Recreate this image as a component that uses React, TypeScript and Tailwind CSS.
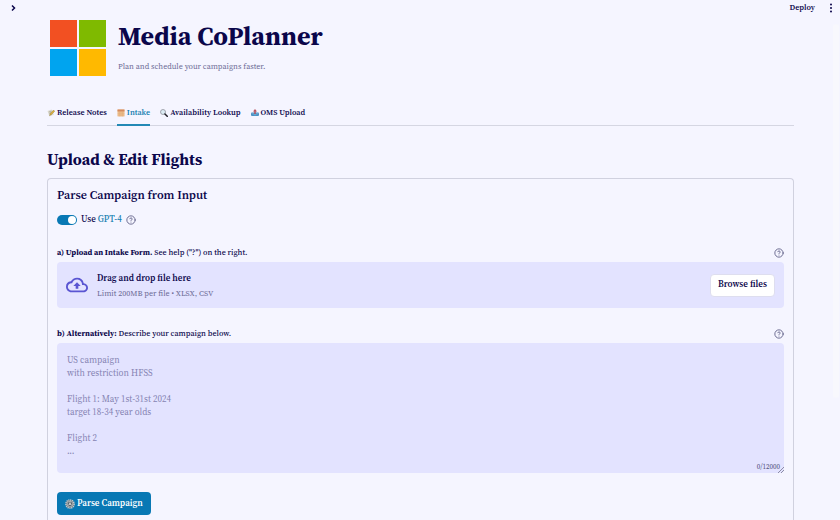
import type { ReactNode } from 'react';

const PLACEHOLDER = `US campaign
with restriction HFSS

Flight 1: May 1st-31st 2024
target 18-34 year olds

Flight 2
...`;

interface TabProps {
  icon: ReactNode;
  label: string;
  active?: boolean;
}

function MemoIcon() {
  return (
    <svg viewBox="0 0 16 16" className="h-2 w-2 shrink-0" aria-hidden="true">
      <path d="M1 4 9 1l5 10-9 4z" fill="#dedbd0" />
      <path d="M3.500 6 9 4M4.500 8.500l4-1.500M6 11l3-1" stroke="#8b8a80" strokeWidth="1" />
      <path d="m5 13 1.500-4L13 2l2.500 2.500-7 7z" fill="#dcae3a" stroke="#7a6a2c" strokeWidth=".7" />
    </svg>
  );
}

function CalendarIcon() {
  return (
    <svg viewBox="0 0 16 16" className="h-2 w-2 shrink-0" aria-hidden="true">
      <rect x="1" y="1" width="14" height="14" rx="1" fill="#efc08d" />
      <path d="M1 1h14v4H1z" fill="#d48a5e" />
      <path d="M1 8.500h14M1 12h14M5.500 5v10M10.500 5v10" stroke="#d9a473" strokeWidth=".8" />
    </svg>
  );
}

function SearchIcon() {
  return (
    <svg viewBox="0 0 16 16" className="h-2 w-2 shrink-0" aria-hidden="true">
      <circle cx="6" cy="6" r="5" fill="#dcecf4" stroke="#8a8d96" strokeWidth="1.500" />
      <path d="m10 10 4.500 4.500" stroke="#202028" strokeWidth="3" strokeLinecap="round" />
    </svg>
  );
}

function OutboxIcon() {
  return (
    <svg viewBox="0 0 16 16" className="h-2 w-2 shrink-0" aria-hidden="true">
      <path d="M1 7h14l1 2v4l-2 1H2l-2-1V9z" fill="#4a91c4" />
      <path d="M2 9.500h3l1 2h4l1-2h3" fill="none" stroke="#8fc0e0" />
      <path d="m8 0 4 5H9.500v5h-3V5H4z" fill="#b8505e" />
    </svg>
  );
}

function GearIcon() {
  return (
    <svg viewBox="0 0 16 16" className="h-[10px] w-[10px] shrink-0" aria-hidden="true">
      <circle cx="8" cy="8" r="6.500" fill="#59656e" stroke="#c4c9cc" strokeWidth="2.500" strokeDasharray="2 1" />
      <circle cx="8" cy="8" r="4.500" fill="none" stroke="#b7bdc0" strokeWidth="1.200" />
      <path d="M8 8V3.500M8 8l4 2.500M8 8l-4 2.500" stroke="#c4c9cc" strokeWidth="1.200" />
      <circle cx="8" cy="8" r="1.500" fill="#d5d8da" />
    </svg>
  );
}

function CloudUploadIcon() {
  return (
    <svg viewBox="0 0 24 24" className="h-[22px] w-[22px] shrink-0 fill-[#5a55d2]" aria-hidden="true">
      <path d="M19.350 10.040A7.490 7.490 0 0 0 12 4C9.110 4 6.600 5.640 5.350 8.040A5.994 5.994 0 0 0 0 14c0 3.310 2.690 6 6 6h13c2.760 0 5-2.240 5-5 0-2.640-2.050-4.780-4.650-4.960zM19 18H6c-2.210 0-4-1.790-4-4s1.790-4 4-4h.710C7.370 7.690 9.480 6 12 6c3.040 0 5.500 2.460 5.500 5.500v.500H19c1.660 0 3 1.340 3 3s-1.340 3-3 3zM8 13h2.550v3h2.900v-3H16l-4-4z" />
    </svg>
  );
}

function HelpButton({ label }: { label: string }) {
  return (
    <button type="button" aria-label={label} className="flex shrink-0 text-[#55557f]">
      <svg viewBox="0 0 24 24" className="h-[10px] w-[10px]" fill="none" stroke="currentColor" strokeWidth="2" strokeLinecap="round" strokeLinejoin="round">
        <circle cx="12" cy="12" r="10" />
        <path d="M9.090 9a3 3 0 0 1 5.830 1c0 2-3 3-3 3M12 17h.010" />
      </svg>
    </button>
  );
}

function Tab({ icon, label, active }: TabProps) {
  return (
    <button
      type="button"
      role="tab"
      aria-selected={!!active}
      className={`-mb-px flex h-6 items-center gap-0.5 border-b-2 text-[8px] font-semibold ${
        active ? 'border-[#2389b5] text-[#167fb0]' : 'border-transparent'
      }`}
    >
      {icon}
      {label}
    </button>
  );
}

export default function App() {
  return (
    <div className="relative flex h-screen flex-col overflow-hidden bg-[#f5f5ff] font-['Source_Serif_4','Source_Serif_Pro','Liberation_Serif',serif] text-[#0b064b]">
      <header className="flex h-4 shrink-0 items-center justify-between pr-1 pl-2">
        <button type="button" aria-label="Open sidebar">
          <svg viewBox="0 0 10 10" className="h-[10px] w-[10px]" fill="none" stroke="currentColor" strokeWidth="1.500">
            <path d="m4 2.500 2.500 2.500L4 7.500" />
          </svg>
        </button>
        <div className="flex items-center gap-[11px]">
          <button type="button" className="text-[8px] font-semibold">Deploy</button>
          <button type="button" aria-label="Menu">
            <svg viewBox="0 0 10 10" className="h-[10px] w-[10px]" fill="currentColor">
              <circle cx="5" cy="1.500" r="1" />
              <circle cx="5" cy="5" r="1" />
              <circle cx="5" cy="8.500" r="1" />
            </svg>
          </button>
        </div>
      </header>

      {/* Scroll thumb */}
      <div className="absolute top-6 right-px h-[72%] w-1.5 rounded-full bg-[#f8f8fd]" />

      <main className="flex min-h-0 flex-1 flex-col pr-[46px] pl-[47px]">
        <div className="flex gap-3 pt-1 pl-[3px]">
          <svg viewBox="0 0 56 56" className="h-14 w-14 shrink-0" aria-hidden="true">
            <path d="M0 0h27v27H0z" fill="#f25022" />
            <path d="M29 0h27v27H29z" fill="#7fba00" />
            <path d="M0 29h27v27H0z" fill="#00a4ef" />
            <path d="M29 29h27v27H29z" fill="#ffb900" />
          </svg>
          <div>
            <h1 className="text-[26px] leading-8 font-bold">Media CoPlanner</h1>
            <p className="mt-[9px] text-[8px] leading-3 text-[#6b6a95]">Plan and schedule your campaigns faster.</p>
          </div>
        </div>

        <div role="tablist" className="mt-[26px] flex gap-[10px] border-b border-[#d5d6e2]">
          <Tab icon={<MemoIcon />} label="Release Notes" />
          <Tab icon={<CalendarIcon />} label="Intake" active />
          <Tab icon={<SearchIcon />} label="Availability Lookup" />
          <Tab icon={<OutboxIcon />} label="OMS Upload" />
        </div>

        <h2 className="mt-[23px] text-[16px] leading-5 font-bold">Upload &amp; Edit Flights</h2>

        <section className="mt-[9px] min-h-0 flex-1 rounded-t border border-b-0 border-[#d0d1df] px-[9px] pt-2">
          <h3 className="text-[12px] leading-4 font-semibold">Parse Campaign from Input</h3>

          <div className="mt-[9px] flex h-4 items-center gap-1 text-[9px] font-medium">
            <label className="flex items-center gap-1">
              <input
                type="checkbox"
                role="switch"
                defaultChecked
                className="flex h-[10px] w-5 appearance-none items-center rounded-full bg-[#b8b8cc] px-px before:h-2 before:w-2 before:rounded-full before:bg-white checked:justify-end checked:bg-[#0878b4]"
              />
              <span>
                Use <span className="text-[#167fb0]">GPT-4</span>
              </span>
            </label>
            <HelpButton label="About GPT-4" />
          </div>

          <div className="mt-[17px] flex h-4 items-center justify-between">
            <label htmlFor="intake" className="text-[8px] leading-4 font-medium">
              <strong>a) Upload an Intake Form.</strong> See help ("?") on the right.
            </label>
            <HelpButton label="Intake form help" />
          </div>
          <div className="mt-px flex h-[46px] items-center rounded bg-[#e3e3ff] px-[9px]">
            <CloudUploadIcon />
            <div className="ml-[9px] flex-1 pt-0.5">
              <p className="text-[9px] leading-[15px] font-semibold">Drag and drop file here</p>
              <p className="text-[8px] leading-[15px] text-[#6b6a95]">Limit 200MB per file • XLSX, CSV</p>
            </div>
            <button id="intake" type="button" className="h-[23px] rounded border border-[#dedeef] bg-white px-[7px] text-[9px] font-semibold">
              Browse files
            </button>
          </div>

          <div className="mt-[18px] flex h-4 items-center justify-between">
            <label htmlFor="campaign" className="text-[8px] leading-4 font-medium">
              <strong>b) Alternatively:</strong> Describe your campaign below.
            </label>
            <HelpButton label="Campaign description help" />
          </div>
          <div className="relative mt-px">
            <textarea
              id="campaign"
              maxLength={12000}
              placeholder={PLACEHOLDER}
              className="block h-[130px] w-full resize-none rounded bg-[#e3e3ff] px-[10px] pt-[11px] text-[9px] leading-[13px] outline-none placeholder:text-[#8684b3]"
            />
            <span className="absolute right-1 bottom-px text-[7px] leading-[10px] text-[#55557f]">0/12000</span>
            <svg viewBox="0 0 6 6" className="absolute right-0 bottom-0 h-1.5 w-1.5" stroke="#666680" strokeWidth=".7" aria-hidden="true">
              <path d="M0 6 6 0M3 6l3-3" />
            </svg>
          </div>

          <button type="button" className="mt-[19px] flex h-[23px] items-center gap-0.5 rounded bg-[#0878b4] px-2 text-[9px] font-semibold text-white">
            <GearIcon />
            Parse Campaign
          </button>
        </section>
      </main>
    </div>
  );
}
